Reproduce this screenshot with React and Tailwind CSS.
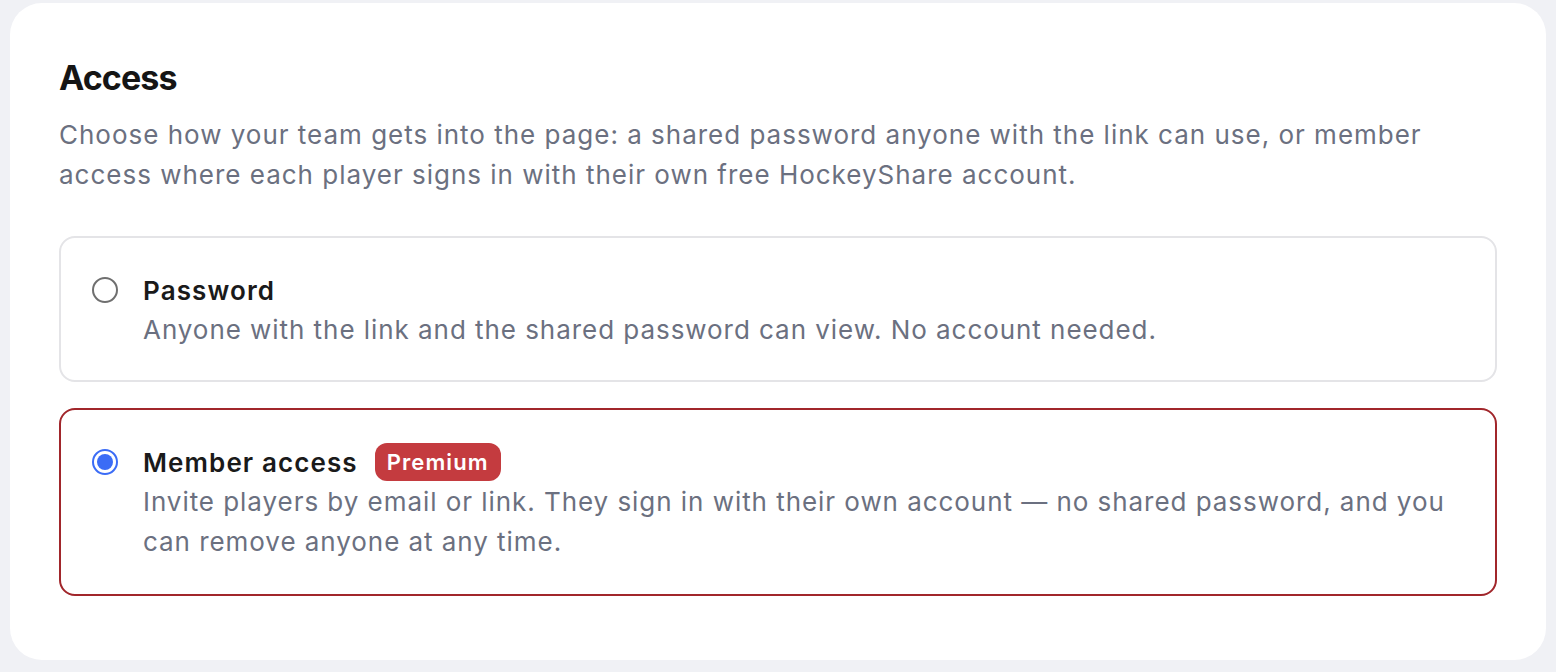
const options = [
  {
    id: "password",
    title: "Password",
    desc: "Anyone with the link and the shared password can view. No account needed.",
  },
  {
    id: "member",
    title: "Member access",
    badge: "Premium",
    desc: "Invite players by email or link. They sign in with their own account — no shared password, and you can remove anyone at any time.",
  },
];

function Radio({ checked }) {
  if (checked) {
    return (
      <span className="flex h-[26px] w-[26px] shrink-0 items-center justify-center rounded-full border-2 border-[#3b6cf6] bg-white">
        <span className="h-[16px] w-[16px] rounded-full bg-[#3b6cf6]" />
      </span>
    );
  }
  return (
    <span className="h-[26px] w-[26px] shrink-0 rounded-full border-2 border-[#6f6f6f] bg-white" />
  );
}

export default function App() {
  const selected = "member";
  return (
    <div
      className="min-h-screen bg-[#f0f1f5] px-[10px] pt-[3px] pb-[12px]"
      style={{ fontFamily: "Inter, 'Noto Sans', sans-serif" }}
    >
      <div className="rounded-[32px] bg-white px-[49px] pt-[53px] pb-[64px]">
        <h2 className="text-[34px] leading-[44px] font-bold text-[#151515] tracking-[-0.9px]">
          Access
        </h2>
        <p className="mt-[15px] text-[26px] leading-[40px] tracking-[0.99px] text-[#6b7080]">
          Choose how your team gets into the page: a shared password anyone with the link can use, or member
          access where each player signs in with their own free HockeyShare account.
        </p>

        <div className="mt-[41px] flex flex-col gap-[26px]">
          {options.map((o) => {
            const on = o.id === selected;
            return (
              <label
                key={o.id}
                className={
                  "flex cursor-pointer gap-[25px] rounded-[16px] border-2 px-[31px] pt-[32px] " +
                  (on ? "border-[#a1262b] pb-[32px]" : "border-[#e4e4e7] pb-[30px]")
                }
              >
                <div className="flex h-[40px] items-center">
                  <Radio checked={on} />
                </div>
                <div className="flex flex-col">
                  <div className="flex h-[40px] items-center gap-[17px]">
                    <span className="text-[26px] font-semibold tracking-[1.1px] text-[#1a1a1a]">{o.title}</span>
                    {o.badge && (
                      <span className="flex h-[38px] items-center rounded-[12px] bg-[#c43b3f] px-[12px] text-[22px] font-semibold tracking-[1.1px] text-white">
                        {o.badge}
                      </span>
                    )}
                  </div>
                  <p className="text-[26px] leading-[40px] tracking-[0.95px] text-[#6b7080]">{o.desc}</p>
                </div>
              </label>
            );
          })}
        </div>
      </div>
    </div>
  );
}
